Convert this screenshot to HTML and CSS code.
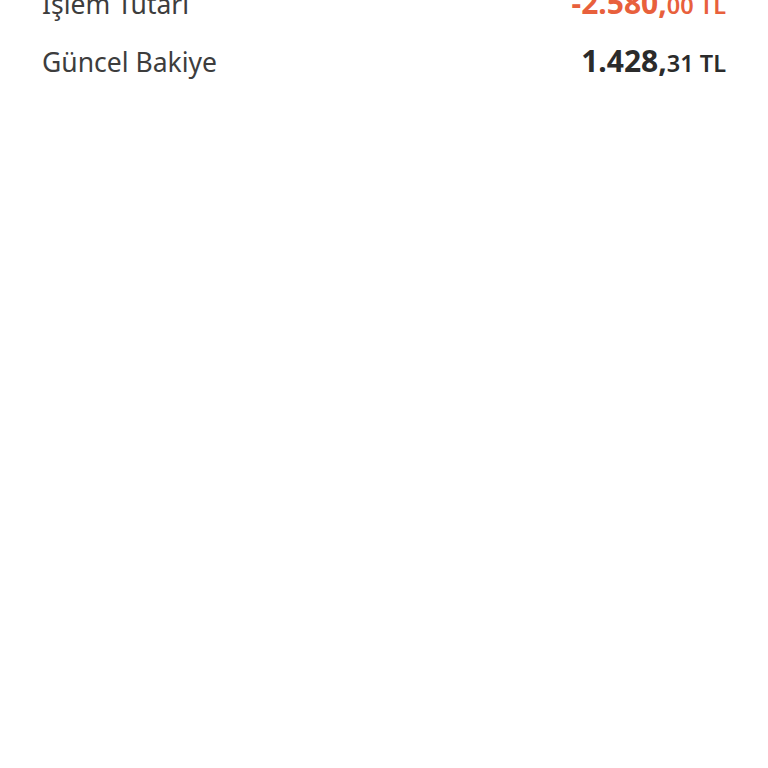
FILE: index.html
```html
<!DOCTYPE html>
<html lang="tr">
  <head>
    <meta charset="utf-8" />
    <meta name="viewport" content="width=device-width, initial-scale=1" />
    <title>İşlem Özeti</title>
    <link rel="stylesheet" href="styles.css">
  </head>
  <body>
    <div class="summary">
      <div class="summary-row">
        <span class="label">İşlem Tutarı</span>
        <span class="amount amount-negative">-2.580,<small>00 TL</small></span>
      </div>
      <div class="summary-row">
        <span class="label">Güncel Bakiye</span>
        <span class="amount">1.428,<small>31 TL</small></span>
      </div>
    </div>
  </body>
</html>
```

FILE: styles.css
```css
html {
  height: 100%;
  width: 100%;
}

body {
  margin: 0;
  background-color: #ffffff;
  font-family: "Noto Sans", "Open Sans", sans-serif;
  color: #333333;
}

.summary {
  margin-top: -26px;
  padding: 0 42px;
  display: flex;
  flex-direction: column;
}

.summary-row {
  display: flex;
  justify-content: space-between;
  align-items: baseline;
  height: 58px;
  line-height: 58px;
}

.label {
  font-size: 26.5px;
  font-weight: 400;
  color: #3d3d3d;
}

.amount {
  font-size: 30px;
  font-weight: 700;
  color: #2b2b2b;
}

.amount small {
  font-size: 23.5px;
  font-weight: 600;
}

.amount-negative {
  color: #e8603c;
}
```
